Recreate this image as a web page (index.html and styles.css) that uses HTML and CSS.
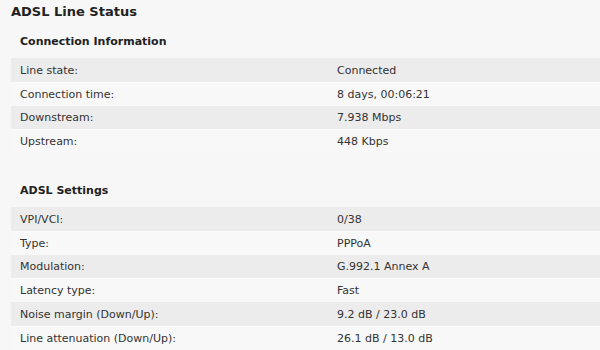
FILE: index.html
```html
<!DOCTYPE html>
<html lang="en">
<head>
  <meta charset="UTF-8" />
  <title>ADSL Line Status</title>
  <link rel="stylesheet" href="styles.css">
</head>
<body>
  <h1 class="page-title">ADSL Line Status</h1>

  <section class="status-group">
    <h2>Connection Information</h2>
    <div class="status-table">
      <div class="status-row"><span class="label">Line state:</span><span class="value">Connected</span></div>
      <div class="status-row"><span class="label">Connection time:</span><span class="value">8 days, 00:06:21</span></div>
      <div class="status-row"><span class="label">Downstream:</span><span class="value">7.938 Mbps</span></div>
      <div class="status-row"><span class="label">Upstream:</span><span class="value">448 Kbps</span></div>
    </div>
  </section>

  <section class="status-group">
    <h2>ADSL Settings</h2>
    <div class="status-table">
      <div class="status-row"><span class="label">VPI/VCI:</span><span class="value">0/38</span></div>
      <div class="status-row"><span class="label">Type:</span><span class="value">PPPoA</span></div>
      <div class="status-row"><span class="label">Modulation:</span><span class="value">G.992.1 Annex A</span></div>
      <div class="status-row"><span class="label">Latency type:</span><span class="value">Fast</span></div>
      <div class="status-row"><span class="label">Noise margin (Down/Up):</span><span class="value">9.2 dB / 23.0 dB</span></div>
      <div class="status-row"><span class="label">Line attenuation (Down/Up):</span><span class="value">26.1 dB / 13.0 dB</span></div>
    </div>
  </section>
</body>
</html>
```

FILE: styles.css
```css
:root {
  --color-bg: #f7f7f7;
  --color-row-odd: #ececec;
  --color-row-even: #f8f8f8;
  --color-text: #333333;
  --color-heading: #222222;
}

* {
  box-sizing: border-box;
}

body {
  margin: 0;
  padding: 0 0 0 11px;
  background: var(--color-bg);
  color: var(--color-text);
  font-family: "DejaVu Sans", Verdana, sans-serif;
  font-size: 11px;
}

.page-title {
  margin: 0;
  font-size: 13px;
  line-height: 23px;
  font-weight: bold;
  color: var(--color-heading);
}

.status-group h2 {
  margin: 11px 0 8px;
  padding-left: 9px;
  font-size: 11px;
  line-height: 16px;
  font-weight: bold;
  color: var(--color-heading);
}

.status-group + .status-group h2 {
  margin-top: 30px;
}

.status-row {
  display: grid;
  grid-template-columns: 326px 1fr;
  align-items: center;
  height: 23.75px;
  background: var(--color-row-even);
  border-top: 1px solid #fbfbfb;
}

.status-row:nth-child(odd) {
  background: var(--color-row-odd);
  border-top-color: var(--color-row-odd);
}

.status-row .label {
  padding-left: 9px;
}
```
